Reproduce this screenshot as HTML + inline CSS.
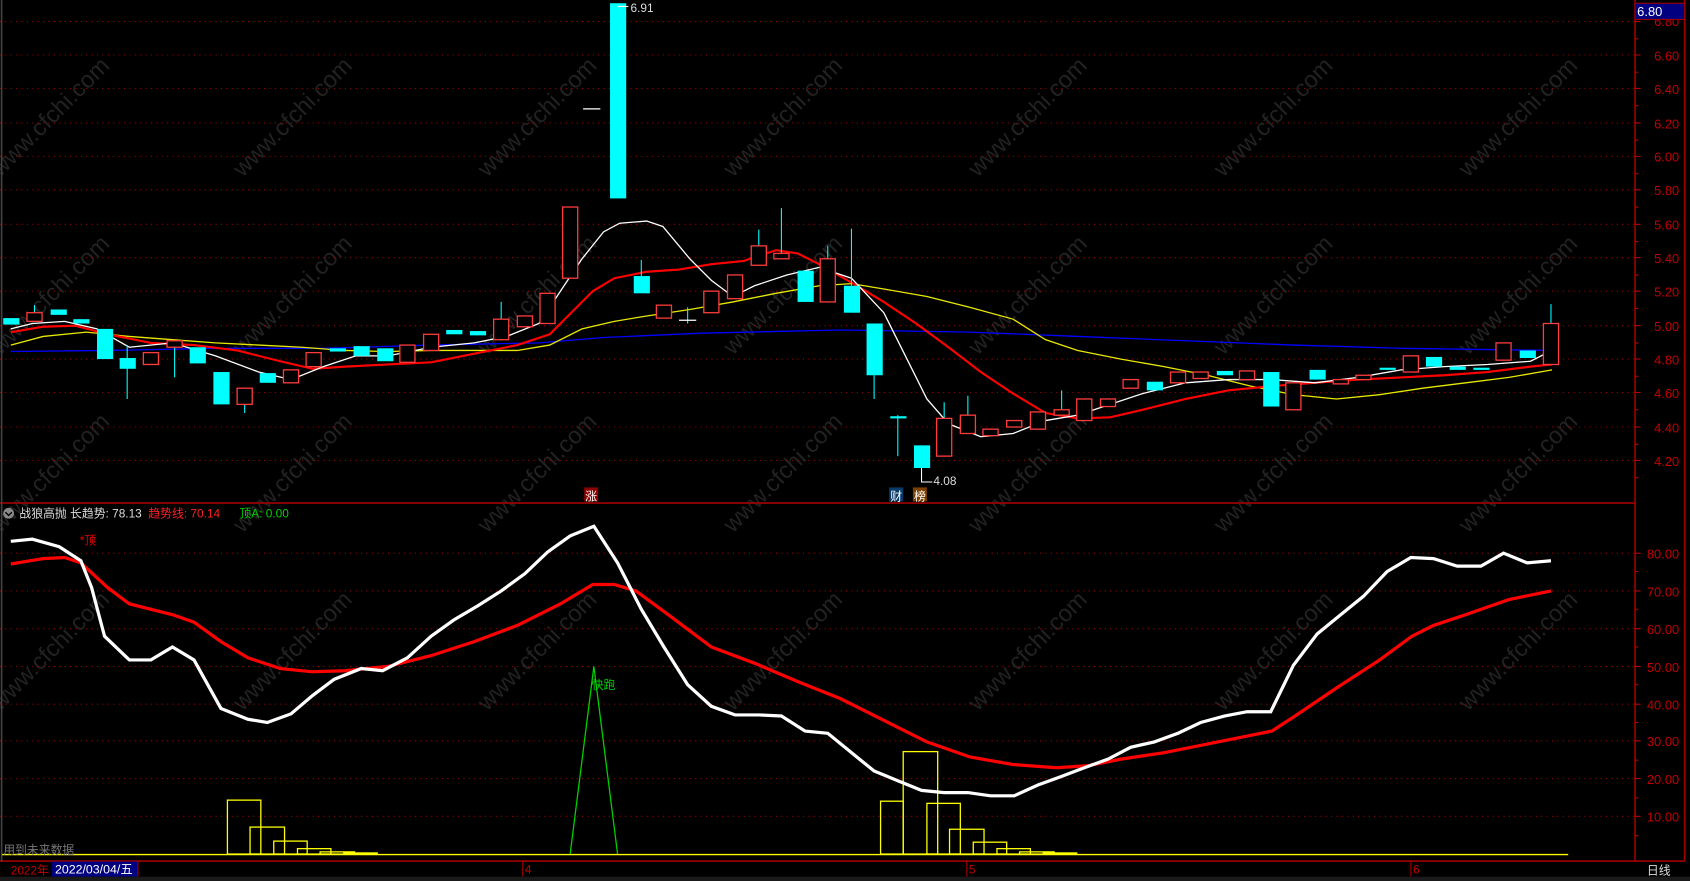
<!DOCTYPE html>
<html><head><meta charset="utf-8"><style>
html,body{margin:0;padding:0;background:#000;width:1690px;height:881px;overflow:hidden}
svg{display:block}
text{font-family:"Liberation Sans","Noto Sans CJK SC",sans-serif}
</style></head><body>
<svg width="1690" height="881" viewBox="0 0 1568 817" preserveAspectRatio="none" xmlns="http://www.w3.org/2000/svg">
<rect width="1568" height="817" fill="#000"/>
<g fill="#262626" font-size="22" opacity="0.9">
<text transform="translate(0,165) rotate(-45)">www.cfchi.com</text>
<text transform="translate(225,165) rotate(-45)">www.cfchi.com</text>
<text transform="translate(452,165) rotate(-45)">www.cfchi.com</text>
<text transform="translate(680,165) rotate(-45)">www.cfchi.com</text>
<text transform="translate(907,165) rotate(-45)">www.cfchi.com</text>
<text transform="translate(1135,165) rotate(-45)">www.cfchi.com</text>
<text transform="translate(1362,165) rotate(-45)">www.cfchi.com</text>
<text transform="translate(0,330) rotate(-45)">www.cfchi.com</text>
<text transform="translate(225,330) rotate(-45)">www.cfchi.com</text>
<text transform="translate(452,330) rotate(-45)">www.cfchi.com</text>
<text transform="translate(680,330) rotate(-45)">www.cfchi.com</text>
<text transform="translate(907,330) rotate(-45)">www.cfchi.com</text>
<text transform="translate(1135,330) rotate(-45)">www.cfchi.com</text>
<text transform="translate(1362,330) rotate(-45)">www.cfchi.com</text>
<text transform="translate(0,495) rotate(-45)">www.cfchi.com</text>
<text transform="translate(225,495) rotate(-45)">www.cfchi.com</text>
<text transform="translate(452,495) rotate(-45)">www.cfchi.com</text>
<text transform="translate(680,495) rotate(-45)">www.cfchi.com</text>
<text transform="translate(907,495) rotate(-45)">www.cfchi.com</text>
<text transform="translate(1135,495) rotate(-45)">www.cfchi.com</text>
<text transform="translate(1362,495) rotate(-45)">www.cfchi.com</text>
<text transform="translate(0,660) rotate(-45)">www.cfchi.com</text>
<text transform="translate(225,660) rotate(-45)">www.cfchi.com</text>
<text transform="translate(452,660) rotate(-45)">www.cfchi.com</text>
<text transform="translate(680,660) rotate(-45)">www.cfchi.com</text>
<text transform="translate(907,660) rotate(-45)">www.cfchi.com</text>
<text transform="translate(1135,660) rotate(-45)">www.cfchi.com</text>
<text transform="translate(1362,660) rotate(-45)">www.cfchi.com</text>
</g>
<g stroke="#a00000" stroke-dasharray="1,4" stroke-width="1">
<line x1="0" x2="1517" y1="20" y2="20"/><line x1="0" x2="1517" y1="51" y2="51"/><line x1="0" x2="1517" y1="82" y2="82"/><line x1="0" x2="1517" y1="114" y2="114"/><line x1="0" x2="1517" y1="145" y2="145"/><line x1="0" x2="1517" y1="176" y2="176"/><line x1="0" x2="1517" y1="208" y2="208"/><line x1="0" x2="1517" y1="239" y2="239"/><line x1="0" x2="1517" y1="270" y2="270"/><line x1="0" x2="1517" y1="302" y2="302"/><line x1="0" x2="1517" y1="333" y2="333"/><line x1="0" x2="1517" y1="364" y2="364"/><line x1="0" x2="1517" y1="396" y2="396"/><line x1="0" x2="1517" y1="427" y2="427"/>
<line x1="0" x2="1517" y1="513" y2="513"/><line x1="0" x2="1517" y1="548" y2="548"/><line x1="0" x2="1517" y1="583" y2="583"/><line x1="0" x2="1517" y1="618" y2="618"/><line x1="0" x2="1517" y1="653" y2="653"/><line x1="0" x2="1517" y1="687" y2="687"/><line x1="0" x2="1517" y1="722" y2="722"/><line x1="0" x2="1517" y1="757" y2="757"/>
</g>
<g stroke="#a00000" stroke-width="1.5" fill="none">
<line x1="0" x2="1517" y1="466.5" y2="466.5"/>
<line x1="1517" x2="1517" y1="0" y2="799"/>
<line x1="1563" x2="1563" y1="0" y2="799"/>
<line x1="0" x2="1563" y1="798.5" y2="798.5"/>
<line x1="1.5" x2="1.5" y1="0" y2="799" stroke="#444"/>
</g>
<g fill="#c00000" font-size="12" text-anchor="end">
<text x="1558" y="24">6.80</text><text x="1558" y="56">6.60</text><text x="1558" y="87">6.40</text><text x="1558" y="119">6.20</text><text x="1558" y="150">6.00</text><text x="1558" y="181">5.80</text><text x="1558" y="213">5.60</text><text x="1558" y="244">5.40</text><text x="1558" y="275">5.20</text><text x="1558" y="307">5.00</text><text x="1558" y="338">4.80</text><text x="1558" y="369">4.60</text><text x="1558" y="401">4.40</text><text x="1558" y="432">4.20</text>
<text x="1558" y="518">80.00</text><text x="1558" y="553">70.00</text><text x="1558" y="588">60.00</text><text x="1558" y="623">50.00</text><text x="1558" y="658">40.00</text><text x="1558" y="692">30.00</text><text x="1558" y="727">20.00</text><text x="1558" y="762">10.00</text>
</g>
<g stroke="#c00000" stroke-width="1">
<path d="M1517 20h5M1517 51h5M1517 82h5M1517 114h5M1517 145h5M1517 176h5M1517 208h5M1517 239h5M1517 270h5M1517 302h5M1517 333h5M1517 364h5M1517 396h5M1517 427h5M1517 36h3M1517 67h3M1517 98h3M1517 130h3M1517 161h3M1517 192h3M1517 224h3M1517 255h3M1517 286h3M1517 318h3M1517 349h3M1517 380h3M1517 412h3M1517 443h3"/>
<path d="M1517 513h5M1517 548h5M1517 583h5M1517 618h5M1517 653h5M1517 687h5M1517 722h5M1517 757h5M1517 530h3M1517 565h3M1517 600h3M1517 635h3M1517 670h3M1517 705h3M1517 740h3M1517 775h3"/>
</g>
<rect x="1517" y="3" width="46" height="15" fill="#000080" stroke="#a00000"/>
<text x="1519" y="15" fill="#fff" font-size="12">6.80</text>
<polyline fill="none" stroke="#0000ff" stroke-width="1.2" points="10,326 100,325 200,323 300,323 400,320 500,318 560,313 650,309 780,306 900,308 1000,312 1100,316 1200,320 1300,323 1440,325"/>
<polyline fill="none" stroke="#e8e800" stroke-width="1.2" points="10,320 40,312 80,308 120,312 160,315 200,318 240,320 280,322 320,325 360,326 400,325 440,325 480,325 510,320 540,305 570,298 600,293 640,287 680,280 720,272 760,265 790,263 820,268 860,275 900,285 940,296 970,315 1000,325 1040,333 1080,340 1120,348 1160,358 1200,366 1240,370 1280,366 1320,360 1360,355 1400,350 1440,343"/>
<polyline fill="none" stroke="#ff0000" stroke-width="2" points="10,308 40,303 70,302 100,310 140,318 180,320 220,325 260,335 290,342 320,340 360,338 400,336 440,328 480,320 510,310 530,290 550,270 570,258 600,252 630,250 660,245 690,242 720,232 740,235 760,245 790,262 820,280 850,300 880,322 910,345 940,365 970,383 1000,388 1030,387 1060,380 1100,370 1140,362 1180,358 1220,355 1260,352 1300,350 1340,348 1380,345 1420,340 1440,338"/>
<polyline fill="none" stroke="#ffffff" stroke-width="1.2" points="10,305 30,300 60,298 90,305 120,322 160,318 200,330 240,345 270,352 300,340 330,330 360,330 400,322 440,318 470,312 500,300 520,270 540,240 560,215 575,207 600,205 615,210 640,240 660,260 680,275 700,265 730,255 760,248 790,258 820,290 840,330 860,370 880,393 910,405 940,402 970,390 1000,385 1030,375 1060,365 1100,355 1140,352 1180,352 1220,355 1260,350 1300,343 1340,340 1380,338 1420,335 1440,325"/>
<g stroke="#00ffff" stroke-width="1">
<path d="M32 283v7M118 320v50M162 316v34M227 375v8M465 280v16M595 241v15M638 285v15M704 213v15M725 193v42M768 228v12M790 212v53M811 348v22M833 385v38M876 373v15M898 367v18M985 362v18M1439 282v18"/>
</g>
<g fill="#00ffff">
<rect x="3" y="295" width="15" height="6"/><rect x="47" y="287" width="15" height="5"/><rect x="68" y="296" width="15" height="4"/><rect x="90" y="305" width="15" height="28"/><rect x="111" y="332" width="15" height="10"/><rect x="176" y="322" width="15" height="15"/><rect x="198" y="345" width="15" height="30"/><rect x="241" y="346" width="15" height="9"/><rect x="306" y="323" width="15" height="3"/><rect x="328" y="321" width="15" height="9"/><rect x="350" y="323" width="15" height="12"/><rect x="414" y="306" width="15" height="4"/><rect x="436" y="307" width="15" height="4"/><rect x="566" y="3" width="15" height="181"/><rect x="588" y="256" width="15" height="16"/><rect x="740" y="251" width="15" height="29"/><rect x="783" y="265" width="15" height="25"/><rect x="804" y="300" width="15" height="48"/><rect x="826" y="386" width="15" height="2"/><rect x="848" y="413" width="15" height="21"/><rect x="1064" y="354" width="15" height="8"/><rect x="1129" y="344" width="15" height="4"/><rect x="1172" y="345" width="15" height="32"/><rect x="1215" y="343" width="15" height="9"/><rect x="1280" y="341" width="15" height="2"/><rect x="1323" y="331" width="15" height="9"/><rect x="1345" y="340" width="15" height="3"/><rect x="1367" y="341" width="15" height="2"/><rect x="1410" y="325" width="15" height="7"/>
</g>
<g fill="#000" stroke="#ff3c3c" stroke-width="1.2">
<rect x="25" y="290" width="14" height="8"/><rect x="133" y="327" width="14" height="11"/><rect x="155" y="316" width="14" height="6"/><rect x="220" y="360" width="14" height="15"/><rect x="263" y="343" width="14" height="12"/><rect x="284" y="327" width="14" height="13"/><rect x="371" y="320" width="14" height="16"/><rect x="393" y="310" width="14" height="15"/><rect x="458" y="296" width="14" height="19"/><rect x="480" y="293" width="14" height="10"/><rect x="501" y="272" width="14" height="28"/><rect x="522" y="192" width="14" height="66"/><rect x="609" y="283" width="14" height="12"/><rect x="653" y="270" width="14" height="20"/><rect x="675" y="255" width="14" height="22"/><rect x="697" y="228" width="14" height="18"/><rect x="718" y="235" width="14" height="5"/><rect x="761" y="240" width="14" height="40"/><rect x="869" y="388" width="14" height="35"/><rect x="891" y="385" width="14" height="17"/><rect x="912" y="398" width="14" height="6"/><rect x="934" y="390" width="14" height="6"/><rect x="956" y="382" width="14" height="16"/><rect x="978" y="380" width="14" height="5"/><rect x="999" y="370" width="14" height="20"/><rect x="1021" y="370" width="14" height="7"/><rect x="1042" y="352" width="14" height="8"/><rect x="1086" y="345" width="14" height="10"/><rect x="1107" y="345" width="14" height="6"/><rect x="1150" y="344" width="14" height="8"/><rect x="1193" y="355" width="14" height="25"/><rect x="1237" y="352" width="14" height="4"/><rect x="1258" y="348" width="14" height="4"/><rect x="1302" y="330" width="14" height="15"/><rect x="1388" y="318" width="14" height="16"/><rect x="1432" y="300" width="14" height="38"/>
</g>
<g stroke="#fff" stroke-width="1.2"><path d="M541 101h16M630 297h16"/></g>
<text x="585" y="11" fill="#ddd" font-size="11">6.91</text>
<path d="M573 6h10" stroke="#fff"/>
<path d="M855 434v13h10" stroke="#fff" fill="none"/>
<text x="866" y="450" fill="#ddd" font-size="11">4.08</text>
<rect x="542" y="452" width="13" height="13" fill="#8b0000"/><text x="543" y="464" fill="#fff" font-size="11">涨</text>
<rect x="825" y="452" width="13" height="13" fill="#0a3a6a"/><text x="826" y="464" fill="#fff" font-size="11">财</text>
<rect x="847" y="452" width="13" height="13" fill="#7a4000"/><text x="848" y="464" fill="#fff" font-size="11">榜</text>
<circle cx="8" cy="476" r="5" fill="#888"/><path d="M5 475l3 3 3-3" stroke="#000" stroke-width="1.3" fill="none"/>
<text x="18" y="480" font-size="11"><tspan fill="#ddd">战狼高抛  长趋势: 78.13 </tspan><tspan fill="#ff2020" dx="3">趋势线: 70.14</tspan><tspan fill="#00d000" dx="18">顶A: 0.00</tspan></text>
<text x="74" y="505" fill="#e00000" font-size="11">*顶</text>
<g fill="none" stroke="#ffff00" stroke-width="1.2">
<rect x="211" y="742" width="31" height="50"/><rect x="232" y="767" width="32" height="25"/><rect x="254" y="780" width="31" height="12"/><rect x="276" y="787" width="31" height="5"/><rect x="297" y="790" width="32" height="2"/><rect x="319" y="791" width="31" height="1"/>
<rect x="817" y="743" width="21" height="49"/><rect x="838" y="697" width="32" height="95"/><rect x="860" y="745" width="31" height="47"/><rect x="881" y="769" width="32" height="23"/><rect x="903" y="781" width="31" height="11"/><rect x="925" y="787" width="31" height="5"/><rect x="946" y="790" width="32" height="2"/><rect x="968" y="791" width="31" height="1"/>
</g>
<line x1="2" x2="1455" y1="792.5" y2="792.5" stroke="#ffff00" stroke-width="1.2"/>
<polyline fill="none" stroke="#00d000" stroke-width="1.2" points="529,792 551,618 573,792"/>
<text x="549" y="639" fill="#00d000" font-size="11">快跑</text>
<polyline fill="none" stroke="#ff0000" stroke-width="3" points="10,523 40,518 60,517 75,522 100,545 120,560 140,565 160,570 180,577 205,595 230,610 260,620 290,623 320,622 360,618 400,608 440,595 480,580 520,560 550,542 570,542 590,548 620,570 660,600 700,615 740,632 780,648 820,668 860,688 900,702 940,709 980,712 1010,710 1040,704 1080,698 1120,690 1160,682 1180,678 1200,665 1240,638 1280,612 1310,590 1330,580 1360,570 1400,556 1439,548"/>
<polyline fill="none" stroke="#ffffff" stroke-width="3" points="10,502 30,500 55,507 75,520 85,545 97,590 120,612 140,612 160,600 180,612 205,657 230,667 248,670 270,662 290,645 310,630 335,620 355,622 378,610 400,590 421,575 443,562 465,548 487,532 508,512 529,497 551,488 573,522 595,565 616,600 638,635 660,655 682,663 704,663 725,664 747,678 768,680 790,698 811,715 833,724 855,733 876,735 898,735 919,738 941,738 963,728 985,720 1006,712 1028,704 1049,693 1071,688 1093,680 1114,670 1136,664 1157,660 1179,660 1200,617 1222,588 1244,570 1265,553 1287,530 1309,517 1330,518 1352,525 1374,525 1395,513 1417,522 1439,520"/>
<text x="3" y="792" fill="#777" font-size="11">用到未来数据</text>
<text x="10" y="811" fill="#c00000" font-size="11">2022年</text>
<rect x="48" y="799" width="80" height="14" fill="#000080"/>
<line x1="128" x2="128" y1="799" y2="813" stroke="#a00000"/>
<text x="51" y="810" fill="#fff" font-size="11.5">2022/03/04/五</text>
<g stroke="#a00000"><path d="M485 799v14M897 799v14M1309 799v14"/></g>
<g fill="#c00000" font-size="11"><text x="487" y="810">4</text><text x="899" y="810">5</text><text x="1311" y="810">6</text></g>
<text x="1528" y="811" fill="#ddd" font-size="11">日线</text>
<rect x="0" y="813" width="1568" height="4" fill="#1a1a1a"/>
</svg>
</body></html>
